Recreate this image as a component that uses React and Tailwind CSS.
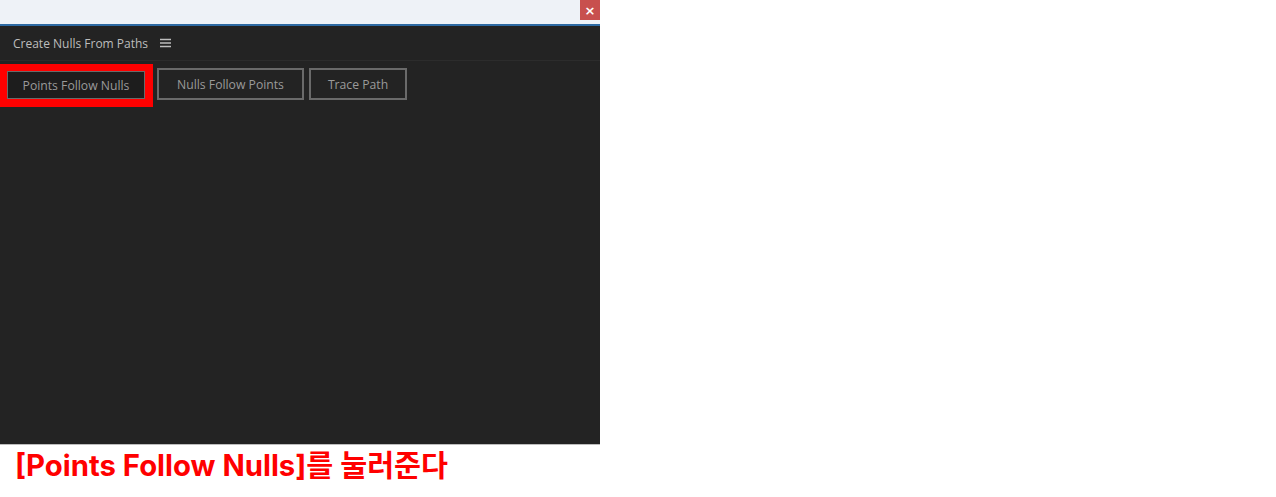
const tabs = ["Points Follow Nulls", "Nulls Follow Points", "Trace Path"];

const App = () => {
  return (
    <div className="w-[1276px] h-[497px] bg-white overflow-hidden">
      <div className="w-[600px]">
        <div className="h-[24px] bg-[#eef2f7] flex justify-end">
          <div className="w-[20px] h-[20px] bg-[#c8504e] flex items-center justify-center text-white text-[13px] font-bold leading-none font-['DejaVu_Sans',sans-serif]">
            ×
          </div>
        </div>
        <div className="h-[2px] bg-[#2d6aa3]" />
        <div className="h-[419px] bg-[#232323] border-b border-[#bdbdbd] font-['Open_Sans',sans-serif]">
          <div className="h-[35px] border-b border-[#2c2c2c] flex items-center pl-[13px] gap-[12px]">
            <span className="text-[12px] text-[#bdbdbd] pt-[1px]">Create Nulls From Paths</span>
            <svg width="11" height="10" viewBox="0 0 11 10">
              <path d="M0 1.5h11M0 5h11M0 8.5h11" stroke="#bdbdbd" strokeWidth="1.3" />
            </svg>
          </div>
          <div className="flex items-start gap-[4px] pt-[3px]">
            <div className="border-t-[7px] border-l-[7px] border-r-[8px] border-b-[8px] border-[#ff0000]">
              <div className="w-[138px] h-[28px] border border-[#6a6a6a] bg-[#1d1d1d] flex items-center justify-center pt-[2px] text-[12.2px] text-[#9a9a9a]">
                {tabs[0]}
              </div>
            </div>
            <div className="flex gap-[5px] mt-[4px]">
              <div className="w-[147px] h-[32px] border-2 border-[#6a6a6a] flex items-center justify-center pt-[2px] text-[12.2px] text-[#9a9a9a]">
                {tabs[1]}
              </div>
              <div className="w-[98px] h-[32px] border-2 border-[#6a6a6a] flex items-center justify-center pt-[2px] text-[12.2px] text-[#9a9a9a]">
                {tabs[2]}
              </div>
            </div>
          </div>
        </div>
        <p className="pl-[15px] pt-[2px] text-[29.3px] leading-[38px] font-bold text-[#ff0000] font-['Inter','Noto_Sans_CJK_KR',sans-serif]">
          [Points Follow Nulls]를 눌러준다
        </p>
      </div>
    </div>
  );
};

export default App;
